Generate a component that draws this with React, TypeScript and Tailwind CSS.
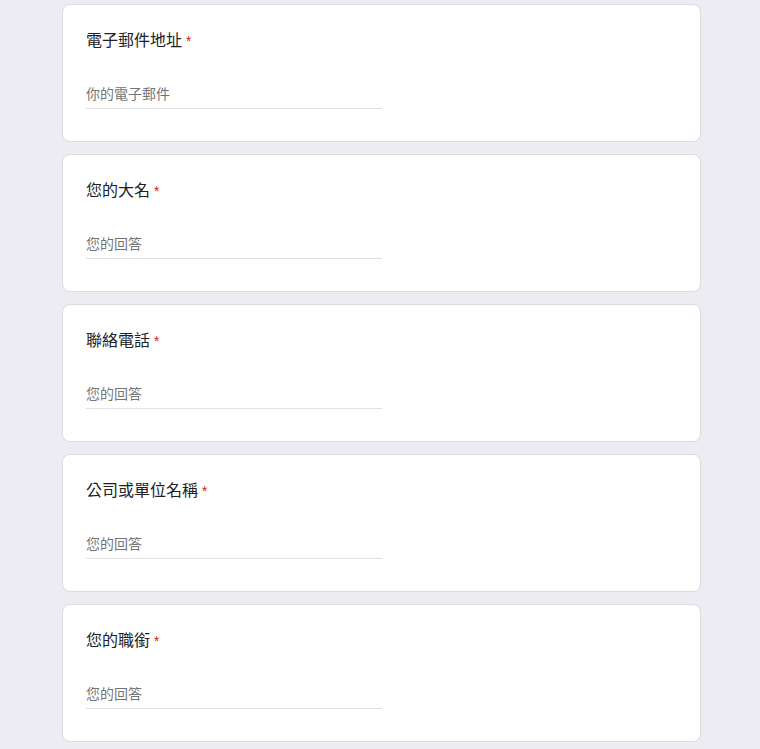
import React from "react";

const items = [
  { title: "電子郵件地址", placeholder: "你的電子郵件" },
  { title: "您的大名", placeholder: "您的回答" },
  { title: "聯絡電話", placeholder: "您的回答" },
  { title: "公司或單位名稱", placeholder: "您的回答" },
  { title: "您的職銜", placeholder: "您的回答" },
];

export default function App() {
  return (
    <div
      className="min-h-[749px] w-[760px] bg-[#edecf2] pt-[4px] pb-[12px]"
      style={{ fontFamily: 'Roboto, "Noto Sans CJK TC", "Noto Sans CJK SC", sans-serif' }}
    >
      <div className="ml-[62px] flex w-[639px] flex-col gap-[12px]">
        {items.map((it) => (
          <div
            key={it.title}
            className="rounded-[8px] border border-[#dadce0] bg-white px-[23px] pt-[24px] pb-[32px]"
          >
            <div className="h-[24px] text-[16px] leading-[24px] text-[#202124]">
              {it.title}
              <span className="relative -top-[1px] pl-[4px] text-[12px] leading-none text-[#d93025]">*</span>
            </div>
            <div className="mt-[31px] w-[296px] border-b border-[#e0e0e0] pb-[4px]">
              <div className="h-[20px] text-[14px] leading-[20px] text-[#70757a]">{it.placeholder}</div>
            </div>
          </div>
        ))}
      </div>
    </div>
  );
}
